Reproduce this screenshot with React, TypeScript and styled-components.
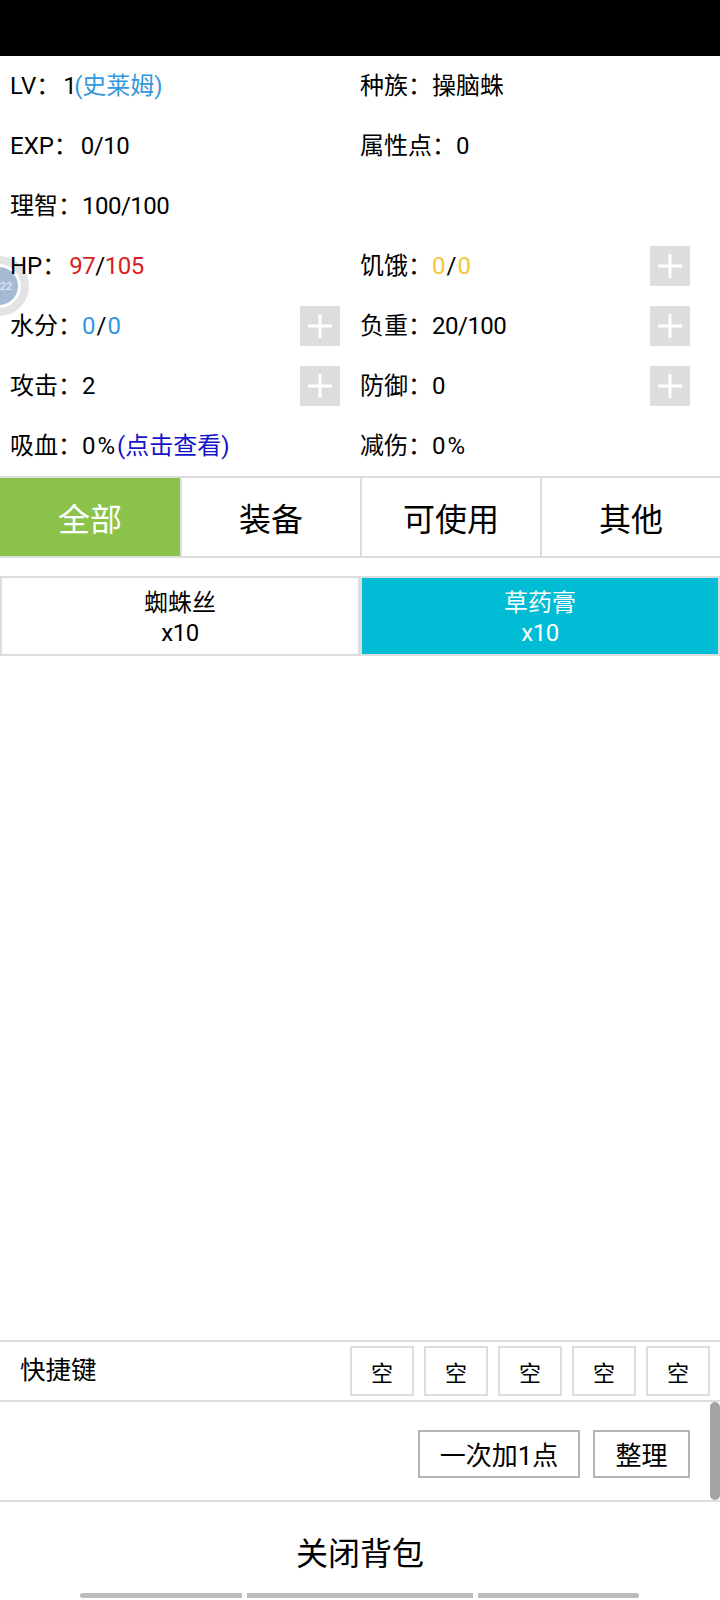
import styled, { createGlobalStyle } from 'styled-components';

const GlobalStyle = createGlobalStyle`
  html, body {
    margin: 0;
    padding: 0;
    background: #fff;
  }
  * {
    box-sizing: border-box;
  }
  body {
    font-family: Roboto, "Noto Sans CJK SC", sans-serif;
    color: #000;
  }
`;

const Page = styled.div`
  position: relative;
  width: 720px;
  height: 1600px;
  display: flex;
  flex-direction: column;
  overflow: hidden;
`;

const StatusBar = styled.div`
  height: 56px;
  background: #000;
`;

const StatGrid = styled.div`
  position: relative;
  z-index: 1;
  display: grid;
  grid-template-columns: 1fr 1fr;
  column-gap: 20px;
  padding: 0 30px 0 10px;
`;

const Stat = styled.div`
  height: 60px;
  display: flex;
  align-items: center;
  justify-content: space-between;
  font-size: 24px;
`;

const StatText = styled.div`
  padding-bottom: 5px;
`;

const LatinLabel = styled.span`
  margin-right: 3px;
`;

const Num = styled.span<{ $color?: string; $spacing?: number }>`
  letter-spacing: ${(p) => p.$spacing ?? -0.5}px;
  color: ${(p) => p.$color ?? 'inherit'};
`;

const Note = styled.span<{ $color: string }>`
  color: ${(p) => p.$color};
`;

const PlusButton = styled.div`
  width: 40px;
  height: 40px;
  background: #ddd;
  display: flex;
  align-items: center;
  justify-content: center;
`;

const Tabs = styled.div`
  display: grid;
  grid-template-columns: repeat(4, 1fr);
  height: 82px;
  border-top: 2px solid #ddd;
  border-bottom: 2px solid #ddd;
`;

const Tab = styled.div<{ $active?: boolean }>`
  display: flex;
  align-items: center;
  justify-content: center;
  font-size: 32px;
  color: ${(p) => (p.$active ? '#fff' : '#000')};
  background: ${(p) => (p.$active ? '#8bc34a' : '#fff')};
  & + & {
    border-left: 2px solid #ddd;
  }
`;

const ItemList = styled.div`
  flex: 1;
  display: grid;
  grid-template-columns: 1fr 1fr;
  align-content: start;
  padding-top: 18px;
`;

const Item = styled.div<{ $active?: boolean }>`
  height: 80px;
  border: 2px solid #ddd;
  padding-top: 4px;
  display: flex;
  flex-direction: column;
  align-items: center;
  justify-content: center;
  font-size: 24px;
  line-height: 30px;
  color: ${(p) => (p.$active ? '#fff' : '#000')};
  background: ${(p) => (p.$active ? '#00bcd4' : '#fff')};
`;

const ShortcutBar = styled.div`
  height: 62px;
  display: flex;
  align-items: center;
  justify-content: space-between;
  padding: 0 10px 0 20px;
  border-top: 2px solid #ddd;
  border-bottom: 2px solid #ddd;
`;

const ShortcutLabel = styled.div`
  font-size: 25.5px;
  padding-bottom: 7px;
`;

const Slots = styled.div`
  display: flex;
  gap: 10px;
`;

const Slot = styled.div`
  width: 64px;
  height: 50px;
  border: 2px solid #ddd;
  display: flex;
  align-items: center;
  justify-content: center;
  font-size: 22px;
`;

const ActionBar = styled.div`
  position: relative;
  height: 100px;
  display: flex;
  align-items: center;
  justify-content: flex-end;
  gap: 13px;
  padding: 5px 30px 0 0;
  border-bottom: 2px solid #ddd;
`;

const ActionButton = styled.div<{ $width: number }>`
  width: ${(p) => p.$width}px;
  height: 48px;
  border: 2px solid #b3b3b3;
  display: flex;
  align-items: center;
  justify-content: center;
  font-size: 26px;
`;

const ScrollThumb = styled.div`
  position: absolute;
  top: 0;
  right: 0;
  width: 10px;
  height: 98px;
  border-radius: 5px;
  background: #a3a3a3;
`;

const CloseButton = styled.div`
  height: 91px;
  display: flex;
  align-items: center;
  justify-content: center;
  padding-top: 6px;
  font-size: 32px;
`;

const GestureBars = styled.div`
  height: 5px;
  margin-bottom: 2px;
  display: flex;
  gap: 5px;
  padding: 0 81px 0 80px;
`;

const GestureBar = styled.div<{ $grow: number }>`
  flex: ${(p) => p.$grow};
  background: #bbb;
  &:first-child {
    border-radius: 3px 0 0 3px;
  }
  &:last-child {
    border-radius: 0 3px 3px 0;
  }
`;

const Bubble = styled.div`
  position: absolute;
  left: -31px;
  top: 256px;
  width: 60px;
  height: 60px;
  border-radius: 50%;
  background: rgba(255, 255, 255, 0.85);
  border: 8px solid rgba(215, 215, 215, 0.7);
  display: flex;
  align-items: center;
  justify-content: center;
`;

const BubbleCore = styled.div`
  width: 38px;
  height: 38px;
  border-radius: 50%;
  background: #a6bad3;
  color: #dfe6ef;
  font-size: 11px;
  font-weight: 500;
  display: flex;
  align-items: center;
  justify-content: center;
  padding-left: 14px;
`;

function Plus() {
  return (
    <PlusButton>
      <svg width="24" height="24" viewBox="0 0 24 24">
        <path d="M12 0v24M0 12h24" stroke="#fff" strokeWidth="3" />
      </svg>
    </PlusButton>
  );
}

const tabs = ['全部', '装备', '可使用', '其他'];

export default function App() {
  return (
    <Page>
      <GlobalStyle />
      <StatusBar />
      <StatGrid>
        <Stat>
          <StatText>
            <LatinLabel>LV：</LatinLabel>
            <Num $spacing={-2.5}>1</Num>
            <Note $color="#3498db">(史莱姆)</Note>
          </StatText>
        </Stat>
        <Stat>
          <StatText>种族：操脑蛛</StatText>
        </Stat>
        <Stat>
          <StatText>
            <LatinLabel>EXP：</LatinLabel>
            <Num>0/10</Num>
          </StatText>
        </Stat>
        <Stat>
          <StatText>
            属性点：<Num>0</Num>
          </StatText>
        </Stat>
        <Stat>
          <StatText>
            理智：<Num>100/100</Num>
          </StatText>
        </Stat>
        <Stat />
        <Stat>
          <StatText>
            <LatinLabel>HP：</LatinLabel>
            <Num $color="#d81e1e">97</Num>
            <Num>/</Num>
            <Num $color="#d81e1e">105</Num>
          </StatText>
        </Stat>
        <Stat>
          <StatText>
            饥饿：<Num $color="#f2c83a" $spacing={1}>0</Num>
            <Num $spacing={1}>/</Num>
            <Num $color="#f2c83a">0</Num>
          </StatText>
          <Plus />
        </Stat>
        <Stat>
          <StatText>
            水分：<Num $color="#3498db" $spacing={1}>0</Num>
            <Num $spacing={1}>/</Num>
            <Num $color="#3498db">0</Num>
          </StatText>
          <Plus />
        </Stat>
        <Stat>
          <StatText>
            负重：<Num>20/100</Num>
          </StatText>
          <Plus />
        </Stat>
        <Stat>
          <StatText>
            攻击：<Num>2</Num>
          </StatText>
          <Plus />
        </Stat>
        <Stat>
          <StatText>
            防御：<Num>0</Num>
          </StatText>
          <Plus />
        </Stat>
        <Stat>
          <StatText>
            吸血：<Num $spacing={2}>0%</Num>
            <Note $color="#1414c8">(点击查看)</Note>
          </StatText>
        </Stat>
        <Stat>
          <StatText>
            减伤：<Num $spacing={2}>0%</Num>
          </StatText>
        </Stat>
      </StatGrid>
      <Tabs>
        {tabs.map((t, i) => (
          <Tab key={t} $active={i === 0}>
            {t}
          </Tab>
        ))}
      </Tabs>
      <ItemList>
        <Item>
          <span>蜘蛛丝</span>
          <Num>x10</Num>
        </Item>
        <Item $active>
          <span>草药膏</span>
          <Num>x10</Num>
        </Item>
      </ItemList>
      <ShortcutBar>
        <ShortcutLabel>快捷键</ShortcutLabel>
        <Slots>
          {[0, 1, 2, 3, 4].map((n) => (
            <Slot key={n}>空</Slot>
          ))}
        </Slots>
      </ShortcutBar>
      <ActionBar>
        <ActionButton $width={162}>一次加1点</ActionButton>
        <ActionButton $width={97}>整理</ActionButton>
        <ScrollThumb />
      </ActionBar>
      <CloseButton>关闭背包</CloseButton>
      <GestureBars>
        <GestureBar $grow={162} />
        <GestureBar $grow={226} />
        <GestureBar $grow={161} />
      </GestureBars>
      <Bubble>
        <BubbleCore>22</BubbleCore>
      </Bubble>
    </Page>
  );
}
